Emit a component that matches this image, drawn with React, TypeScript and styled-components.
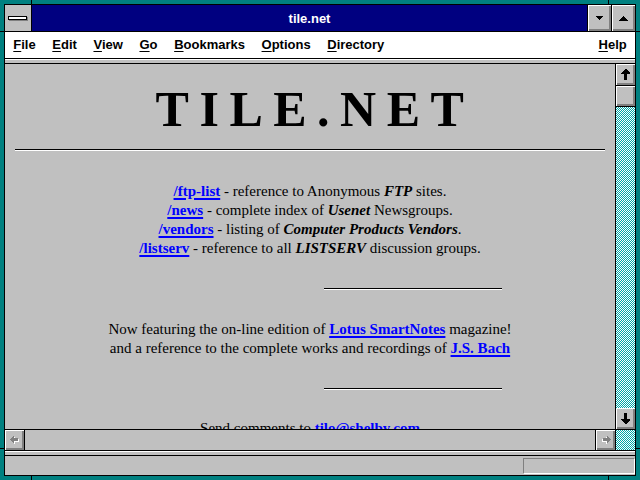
import React from 'react';
import styled, { createGlobalStyle } from 'styled-components';

const GlobalStyle = createGlobalStyle`
  html, body {
    margin: 0;
    padding: 0;
    overflow: hidden;
    background: #008080;
  }
`;

const FACE = '#c0c0c0';
const SHADOW = '#808080';
const TEAL = '#008080';

const tick = (x: string, y: string, w: number, h: number) =>
  `linear-gradient(#000, #000) ${x} ${y} / ${w}px ${h}px no-repeat`;

const Frame = styled.div`
  width: 640px;
  height: 480px;
  box-sizing: border-box;
  padding: 4px;
  background: ${tick('31px', '0', 1, 4)}, ${tick('608px', '0', 1, 4)},
    ${tick('31px', '476px', 1, 4)}, ${tick('608px', '476px', 1, 4)},
    ${tick('0', '31px', 4, 1)}, ${tick('636px', '31px', 4, 1)},
    ${tick('0', '448px', 4, 1)}, ${tick('636px', '448px', 4, 1)}, ${TEAL};
`;

const Window = styled.div`
  height: 100%;
  box-sizing: border-box;
  border: 1px solid #000;
  display: flex;
  flex-direction: column;
  background: ${FACE};
  font-family: 'Liberation Sans', Arial, sans-serif;
`;

const TitleBar = styled.div`
  height: 26px;
  display: flex;
  border-bottom: 1px solid #000;
  flex: none;
`;

const SysButton = styled.div`
  width: 26px;
  border-right: 1px solid #000;
  background: ${FACE};
  display: flex;
  align-items: center;
  justify-content: center;
`;

const SysBar = styled.div`
  width: 17px;
  height: 2px;
  background: #fff;
  border: 1px solid #000;
  box-shadow: 1px 1px 0 ${SHADOW};
  margin-left: -2px;
`;

const Title = styled.div`
  flex: 1;
  background: #000080;
  color: #fff;
  font-weight: 700;
  font-size: 13px;
  display: flex;
  align-items: center;
  justify-content: center;
`;

const CaptionButton = styled.div`
  width: 23px;
  border-left: 1px solid #000;
  background: ${FACE};
  box-shadow: inset 1px 1px #fff, inset -1px -1px ${SHADOW}, inset -2px -2px ${SHADOW};
  display: flex;
  align-items: center;
  justify-content: center;
  svg {
    display: block;
  }
`;

const MenuBar = styled.div`
  height: 26px;
  flex: none;
  background: #fff;
  border-bottom: 1px solid #000;
  display: flex;
  align-items: center;
  font-weight: 700;
  font-size: 13px;
`;

const MenuItem = styled.span<{ $right?: boolean }>`
  padding: 0 8.3px 1px;
  margin-left: ${p => (p.$right ? 'auto' : '0')};
  u {
    text-decoration-thickness: 1px;
    text-underline-offset: 2px;
  }
`;

const Band = styled.div`
  height: 3px;
  flex: none;
  background: ${FACE};
  border-top: 1px solid #fff;
  border-bottom: 1px solid #000;
`;

const Body = styled.div`
  flex: 1;
  display: flex;
  min-height: 0;
`;

const MainColumn = styled.div`
  flex: 1;
  display: flex;
  flex-direction: column;
  min-width: 0;
`;

const Page = styled.div`
  flex: 1;
  overflow: hidden;
  padding: 0 10px;
  background: ${FACE};
  font-family: 'Liberation Serif', 'Times New Roman', serif;
  font-size: 15px;
  line-height: 19px;
  color: #000;
  text-align: center;
`;

const Heading = styled.div`
  margin: 17px 0 0;
  height: 56px;
  font-size: 50px;
  line-height: 56px;
  font-weight: 700;
  letter-spacing: 10.5px;
  padding-left: 10px;
`;

const Rule = styled.hr<{ $short?: boolean; $top: number }>`
  border: 0;
  height: 0;
  margin: ${p => p.$top}px 0 0 ${p => (p.$short ? '309px' : '0')};
  width: ${p => (p.$short ? '178px' : 'auto')};
  border-top: 1px solid #000;
  border-bottom: 1px solid #fff;
`;

const Block = styled.div<{ $top: number }>`
  margin-top: ${p => p.$top}px;
`;

const Link = styled.a`
  color: #0000ff;
  font-weight: 700;
  text-decoration: underline;
  text-decoration-thickness: 2px;
  text-underline-offset: 2px;
`;

const Em = styled.b`
  font-style: italic;
`;

const HScroll = styled.div`
  height: 20px;
  flex: none;
  border-top: 1px solid #000;
  display: flex;
  background: ${FACE};
`;

const ScrollButton = styled.div<{ $w?: number; $h?: number }>`
  width: ${p => (p.$w ? `${p.$w}px` : 'auto')};
  height: ${p => (p.$h ? `${p.$h}px` : 'auto')};
  flex: none;
  background: ${FACE};
  box-shadow: inset 1px 1px #fff, inset -1px -1px ${SHADOW}, inset -2px -2px ${SHADOW};
  display: flex;
  align-items: center;
  justify-content: center;
  svg {
    display: block;
  }
`;

const HTrack = styled.div`
  flex: 1;
  border-left: 1px solid #000;
  border-right: 1px solid #000;
`;

const VScroll = styled.div`
  width: 19px;
  flex: none;
  border-left: 1px solid #000;
  display: flex;
  flex-direction: column;
`;

const DitherBox = styled.div<{ $h?: number }>`
  flex: ${p => (p.$h ? 'none' : '1')};
  height: ${p => (p.$h ? `${p.$h}px` : 'auto')};
  min-height: 0;
  overflow: hidden;
  svg {
    display: block;
  }
`;

const Separator = styled.div`
  height: 1px;
  flex: none;
  background: #000;
`;

const StatusBar = styled.div`
  height: 19px;
  flex: none;
  display: flex;
  justify-content: flex-end;
  align-items: center;
`;

const StatusBox = styled.div`
  width: 110px;
  height: 14px;
  margin-top: 1px;
  border-top: 1px solid ${SHADOW};
  border-left: 1px solid ${SHADOW};
  border-right: 1px solid #fff;
  border-bottom: 1px solid #fff;
`;

let ditherId = 0;

const Dither = ({ h }: { h?: number }) => {
  const id = React.useMemo(() => `dither${ditherId++}`, []);
  return (
    <DitherBox $h={h}>
      <svg width="19" height="400" shapeRendering="crispEdges">
        <defs>
          <pattern id={id} width="2" height="2" patternUnits="userSpaceOnUse">
            <rect width="2" height="2" fill="#ffffff" />
            <rect width="1" height="1" fill="#00a8a8" />
            <rect x="1" y="1" width="1" height="1" fill="#00a8a8" />
          </pattern>
        </defs>
        <rect width="19" height="400" fill={`url(#${id})`} />
      </svg>
    </DitherBox>
  );
};

const TriDown = () => (
  <svg width="7" height="4" shapeRendering="crispEdges">
    <polygon points="0,0 7,0 3.5,4" fill="#000" />
  </svg>
);

const TriUp = () => (
  <svg width="9" height="5" shapeRendering="crispEdges">
    <polygon points="4.5,0 9,5 0,5" fill="#000" />
  </svg>
);

const ArrowV = ({ down }: { down?: boolean }) => (
  <svg width="9" height="11" shapeRendering="crispEdges" style={down ? { transform: 'scaleY(-1)' } : undefined}>
    <polygon points="4,0 5,0 9,4 9,5 6,5 6,11 3,11 3,5 0,5 0,4" fill="#000" />
  </svg>
);

const ArrowH = ({ right }: { right?: boolean }) => (
  <svg width="10" height="10" shapeRendering="crispEdges" style={right ? { transform: 'scaleX(-1)' } : undefined}>
    <polygon points="1,5.5 5,1.5 5,4 9,4 9,7 5,7 5,9.5" fill="#fff" />
    <polygon points="0,4.5 4,0.5 4,3 8,3 8,6 4,6 4,8.5" fill={SHADOW} />
  </svg>
);

const menus: [string, string][] = [
  ['F', 'ile'],
  ['E', 'dit'],
  ['V', 'iew'],
  ['G', 'o'],
  ['B', 'ookmarks'],
  ['O', 'ptions'],
  ['D', 'irectory'],
];

export default function App() {
  return (
    <Frame>
      <GlobalStyle />
      <Window>
        <TitleBar>
          <SysButton>
            <SysBar />
          </SysButton>
          <Title>tile.net</Title>
          <CaptionButton>
            <TriDown />
          </CaptionButton>
          <CaptionButton>
            <TriUp />
          </CaptionButton>
        </TitleBar>
        <MenuBar>
          {menus.map(([k, rest]) => (
            <MenuItem key={k}>
              <u>{k}</u>
              {rest}
            </MenuItem>
          ))}
          <MenuItem $right>
            <u>H</u>elp
          </MenuItem>
        </MenuBar>
        <Band />
        <Body>
          <MainColumn>
            <Page>
              <Heading>TILE.NET</Heading>
              <Rule $top={12} />
              <Block $top={31}>
                <Link>/ftp-list</Link> - reference to Anonymous <Em>FTP</Em> sites.
                <br />
                <Link>/news</Link> - complete index of <Em>Usenet</Em> Newsgroups.
                <br />
                <Link>/vendors</Link> - listing of <Em>Computer Products Vendors</Em>.
                <br />
                <Link>/listserv</Link> - reference to all <Em>LISTSERV</Em> discussion groups.
              </Block>
              <Rule $short $top={30} />
              <Block $top={30}>
                Now featuring the on-line edition of <Link>Lotus SmartNotes</Link> magazine!
                <br />
                and a reference to the complete works and recordings of <Link>J.S. Bach</Link>
              </Block>
              <Rule $short $top={30} />
              <Block $top={29}>
                Send comments to <Link>tilo@shelby.com</Link>
              </Block>
            </Page>
            <HScroll>
              <ScrollButton $w={19}>
                <ArrowH />
              </ScrollButton>
              <HTrack />
              <ScrollButton $w={19}>
                <ArrowH right />
              </ScrollButton>
            </HScroll>
          </MainColumn>
          <VScroll>
            <ScrollButton $h={21}>
              <ArrowV />
            </ScrollButton>
            <Separator />
            <ScrollButton $h={20} />
            <Separator />
            <Dither />
            <ScrollButton $h={21}>
              <ArrowV down />
            </ScrollButton>
            <Separator />
            <Dither h={20} />
          </VScroll>
        </Body>
        <Separator />
        <Band />
        <StatusBar>
          <StatusBox />
        </StatusBar>
      </Window>
    </Frame>
  );
}
